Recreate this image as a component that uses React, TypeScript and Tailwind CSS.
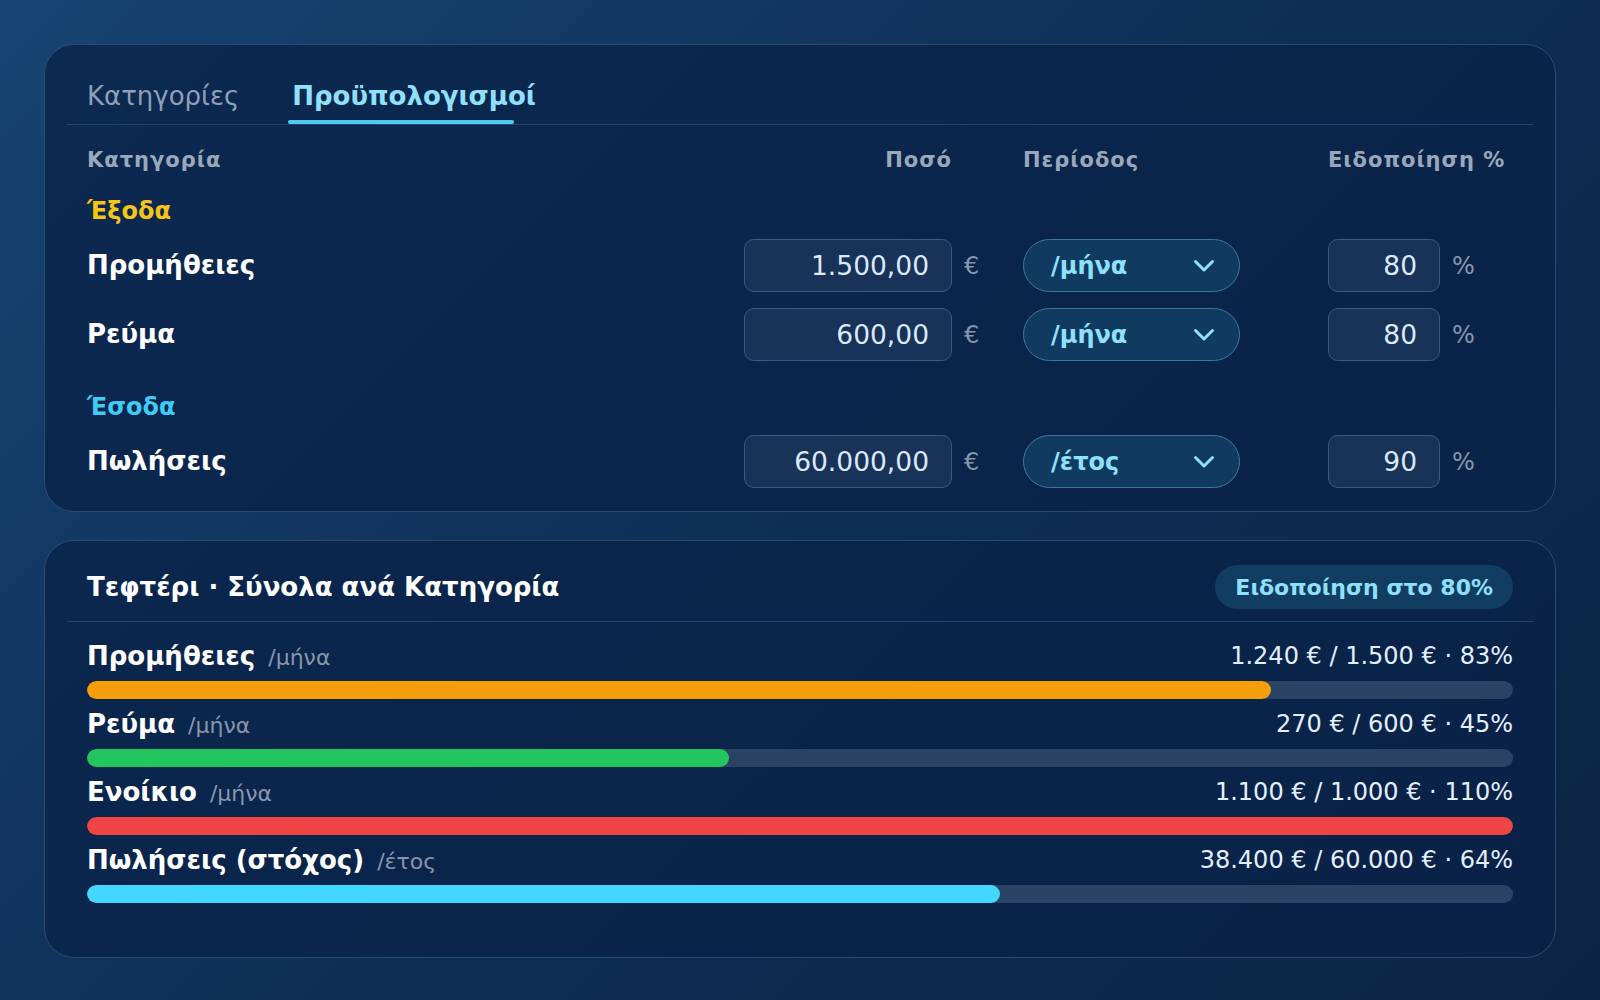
const font = { fontFamily: '"DejaVu Sans", "Noto Sans", sans-serif' };

interface BudgetRow {
    name: string;
    amount: string;
    period: string;
    alert: string;
}

const expenses: BudgetRow[] = [
    { name: 'Προμήθειες', amount: '1.500,00', period: '/μήνα', alert: '80' },
    { name: 'Ρεύμα', amount: '600,00', period: '/μήνα', alert: '80' },
];

const income: BudgetRow[] = [{ name: 'Πωλήσεις', amount: '60.000,00', period: '/έτος', alert: '90' }];

const ledger = [
    { name: 'Προμήθειες', period: '/μήνα', text: '1.240 € / 1.500 € · 83%', pct: 83, color: 'bg-[#f59e0b]' },
    { name: 'Ρεύμα', period: '/μήνα', text: '270 € / 600 € · 45%', pct: 45, color: 'bg-[#22c55e]' },
    { name: 'Ενοίκιο', period: '/μήνα', text: '1.100 € / 1.000 € · 110%', pct: 110, color: 'bg-[#ef4444]' },
    { name: 'Πωλήσεις (στόχος)', period: '/έτος', text: '38.400 € / 60.000 € · 64%', pct: 64, color: 'bg-[#43d6ff]' },
];

const cols = 'grid grid-cols-[1fr_208px_71px_217px_88px_112px_73px] items-center';

function Chevron() {
    return (
        <svg width="22" height="14" viewBox="0 0 22 14" fill="none" className="text-[#8fe0fb]">
            <polyline points="2.5,2.5 11,11 19.5,2.5" stroke="currentColor" strokeWidth="3" strokeLinecap="round" strokeLinejoin="round" />
        </svg>
    );
}

function Row({ row }: { row: BudgetRow }) {
    return (
        <div className={`${cols} py-2`}>
            <span className="text-[26px] font-bold text-white">{row.name}</span>
            <div className="h-[53px] rounded-[10px] border border-[#3c5a7d] bg-[#183357] pr-[22px] flex items-center justify-end text-[26.5px] text-[#dbe9fb]">
                {row.amount}
            </div>
            <span className="pl-3 text-[24px] text-[#8796ab]">€</span>
            <div className="h-[53px] rounded-full border-[1.5px] border-[#3d78a3] bg-[#113a61] pl-[27px] pr-[24px] flex items-center justify-between">
                <span className="text-[24px] font-bold text-[#8fe0fb]">{row.period}</span>
                <Chevron />
            </div>
            <span />
            <div className="h-[53px] rounded-[10px] border border-[#3c5a7d] bg-[#183357] pr-[22px] flex items-center justify-end text-[26.5px] text-[#dbe9fb]">
                {row.alert}
            </div>
            <span className="pl-3 text-[24px] text-[#8796ab]">%</span>
        </div>
    );
}

export default function App() {
    return (
        <div
            style={font}
            className="w-[1600px] h-[1000px] bg-[linear-gradient(135deg,#174473_0%,#0f3058_45%,#0c2444_100%)] px-[44px] pt-[44px] flex flex-col gap-[28px]"
        >
            {/* budgets card */}
            <div className="rounded-[30px] border border-[#2b4b70] bg-[#0a2147]/75 px-[22px] pt-[22px] pb-[15px]">
                <div className="flex border-b border-[#24456b] px-5 gap-[53px]">
                    <div className="pt-[12px] pb-[11px] text-[26px] leading-[34px] text-[#8f9fb5]">Κατηγορίες</div>
                    <div className="relative pt-[12px] pb-[11px] text-[26px] leading-[34px] font-bold text-[#8fe0fb]">
                        Προϋπολογισμοί
                        <div className="absolute left-[-4px] bottom-0 h-[4px] w-[226px] rounded-full bg-[#4ccaf4]" />
                    </div>
                </div>

                <div className="px-5">
                    <div className={`${cols} mt-[23px] text-[21px] leading-[24px] font-bold tracking-[1px] text-[#9aa8ba]`}>
                        <span>Κατηγορία</span>
                        <span className="text-right">Ποσό</span>
                        <span />
                        <span>Περίοδος</span>
                        <span />
                        <span className="col-span-2">Ειδοποίηση %</span>
                    </div>

                    <div className="mt-[27px] text-[24px] leading-[24px] font-bold text-[#f5c518]">Έξοδα</div>
                    <div className="mt-2">
                        {expenses.map((r) => (
                            <Row key={r.name} row={r} />
                        ))}
                    </div>

                    <div className="mt-[26px] text-[24px] leading-[24px] font-bold text-[#3fcdf7]">Έσοδα</div>
                    <div className="mt-2">
                        {income.map((r) => (
                            <Row key={r.name} row={r} />
                        ))}
                    </div>
                </div>
            </div>

            {/* ledger card */}
            <div className="rounded-[30px] border border-[#2b4b70] bg-[#0a2147]/75 px-[22px] pt-[24px] pb-[54px]">
                <div className="flex items-center justify-between border-b border-[#24456b] px-5 pb-3">
                    <span className="text-[26px] font-bold text-white">Τεφτέρι · Σύνολα ανά Κατηγορία</span>
                    <span className="h-[44px] px-5 rounded-full bg-[#123d63] flex items-center text-[22px] font-bold text-[#8fe0fb]">
                        Ειδοποίηση στο 80%
                    </span>
                </div>

                <div className="px-5 pt-[19px] flex flex-col gap-[10px]">
                    {ledger.map((l) => (
                        <div key={l.name}>
                            <div className="flex items-center justify-between h-[30px]">
                                <div className="flex items-baseline gap-[13px]">
                                    <span className="text-[26px] font-bold text-white">{l.name}</span>
                                    <span className="text-[22px] text-[#8796ab]">{l.period}</span>
                                </div>
                                <span className="text-[24px] text-[#e2effc]">{l.text}</span>
                            </div>
                            <div className="mt-[10px] h-[18px] rounded-full bg-[#2a4263] overflow-hidden">
                                <div
                                    className={`h-full rounded-full ${l.color}`}
                                    style={{ width: `${Math.min(l.pct, 100)}%` }}
                                />
                            </div>
                        </div>
                    ))}
                </div>
            </div>
        </div>
    );
}
